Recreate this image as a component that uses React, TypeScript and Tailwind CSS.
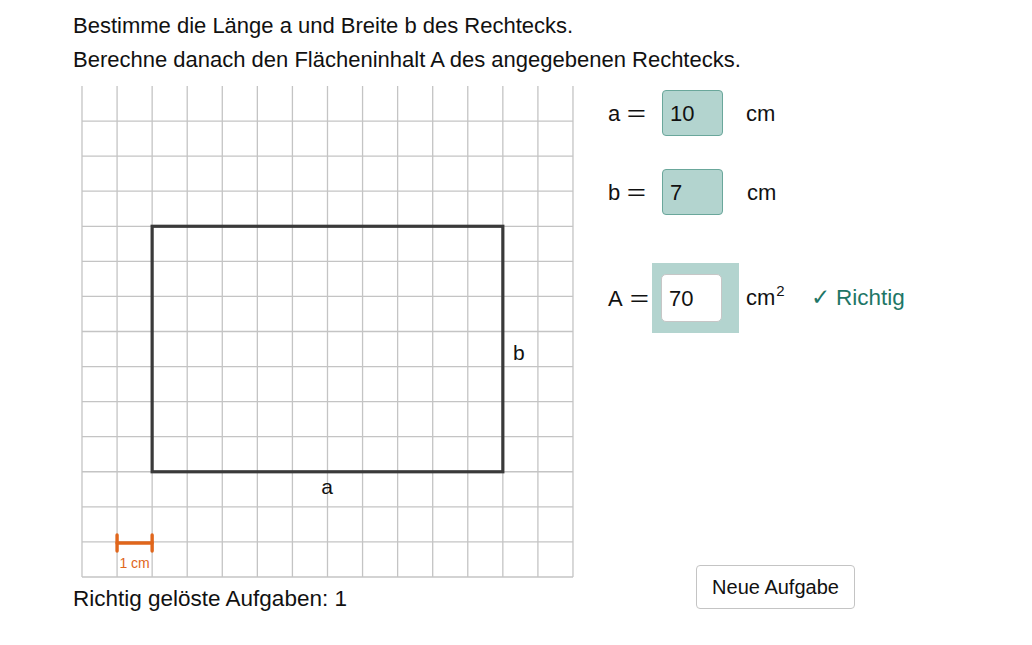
import React from 'react';

const STEP = 35.07;
const GRID_N = 14;

const GridSheet: React.FC = () => {
    const lines = [];
    for (let k = 0; k <= GRID_N; k++) {
        const x = 1 + k * STEP;
        lines.push(<line key={`v${k}`} x1={x} y1={0} x2={x} y2={GRID_N * STEP} stroke="#c4c4c4" strokeWidth={1.3} />);
        if (k > 0) {
            const y = k * STEP;
            lines.push(<line key={`h${k}`} x1={1} y1={y} x2={1 + GRID_N * STEP} y2={y} stroke="#c4c4c4" strokeWidth={1.3} />);
        }
    }
    const x0 = 1 + 2 * STEP;
    const x1 = 1 + 12 * STEP;
    const y0 = 4 * STEP;
    const y1 = 11 * STEP;

    return (
        <svg width={494} height={494} viewBox="0 0 494 494" className="block">
            {lines}
            <rect x={x0} y={y0} width={x1 - x0} height={y1 - y0} fill="none" stroke="#3a3a3a" strokeWidth={3.2} />
            <text x={246} y={408} fontSize={21} textAnchor="middle" fill="#111">a</text>
            <text x={432} y={274} fontSize={21} fill="#111">b</text>
            {/* scale bar */}
            <g stroke="#e0661c" strokeLinecap="round">
                <line x1={1 + STEP} y1={457} x2={x0} y2={457} strokeWidth={3.4} />
                <line x1={1 + STEP} y1={449} x2={1 + STEP} y2={465} strokeWidth={3.4} />
                <line x1={x0} y1={449} x2={x0} y2={465} strokeWidth={3.4} />
            </g>
            <text x={53.6} y={482} fontSize={14} textAnchor="middle" fill="#e0661c">1 cm</text>
        </svg>
    );
};

// wide math-style equals sign
const Eq: React.FC = () => <span className="inline-block ml-[10px] scale-x-150">=</span>;

const App: React.FC = () => {
    return (
        <div
            className="w-[1032px] h-[645px] bg-white text-[#111] overflow-hidden"
            style={{ fontFamily: '"Liberation Sans", Arial, sans-serif' }}
        >
            <div className="pl-[73px] pt-[9px] text-[22px] leading-[34px]">
                <p>Bestimme die Länge a und Breite b des Rechtecks.</p>
                <p>Berechne danach den Flächeninhalt A des angegebenen Rechtecks.</p>
            </div>

            <div className="flex items-start mt-[9px]">
                <div className="ml-[73px] flex flex-col">
                    <div className="ml-[8px]">
                        <GridSheet />
                    </div>
                    <p className="mt-[5px] text-[22.5px] leading-[28px]">Richtig gelöste Aufgaben: 1</p>
                </div>

                <div className="ml-[33px] flex flex-col text-[22px]">
                    <div className="flex items-center mt-[4px] h-[46px]">
                        <span className="w-[54px] whitespace-nowrap">a<Eq /></span>
                        <div className="w-[61px] h-[46px] rounded-[4px] bg-[#b3d4cf] border border-[#6aa79b] flex items-center pl-[7px]">10</div>
                        <span className="ml-[23px]">cm</span>
                    </div>
                    <div className="flex items-center mt-[33px] h-[46px]">
                        <span className="w-[54px] whitespace-nowrap">b<Eq /></span>
                        <div className="w-[61px] h-[46px] rounded-[4px] bg-[#b3d4cf] border border-[#6aa79b] flex items-center pl-[7px]">7</div>
                        <span className="ml-[24px]">cm</span>
                    </div>
                    <div className="flex items-center mt-[48px] h-[70px]">
                        <span className="w-[44px] whitespace-nowrap">A<Eq /></span>
                        <div className="w-[87px] h-[70px] bg-[#b3d4cf] flex items-center pl-[9px]">
                            <div className="w-[61px] h-[48px] rounded-[5px] bg-white border border-[#c6c6c6] flex items-center pl-[7px]">70</div>
                        </div>
                        <span className="ml-[7px] relative top-[-1px]">
                            cm<span className="text-[15px] relative -top-[9px] ml-[1px]">2</span>
                        </span>
                        <span className="ml-[26px] text-[#1e7666] text-[22.5px]">✓ Richtig</span>
                    </div>
                    <button className="mt-[232px] ml-[88px] w-[159px] h-[44px] rounded-[4px] border border-[#c4c4c4] bg-white text-[20px] text-[#111]">
                        Neue Aufgabe
                    </button>
                </div>
            </div>
        </div>
    );
};

export default App;
